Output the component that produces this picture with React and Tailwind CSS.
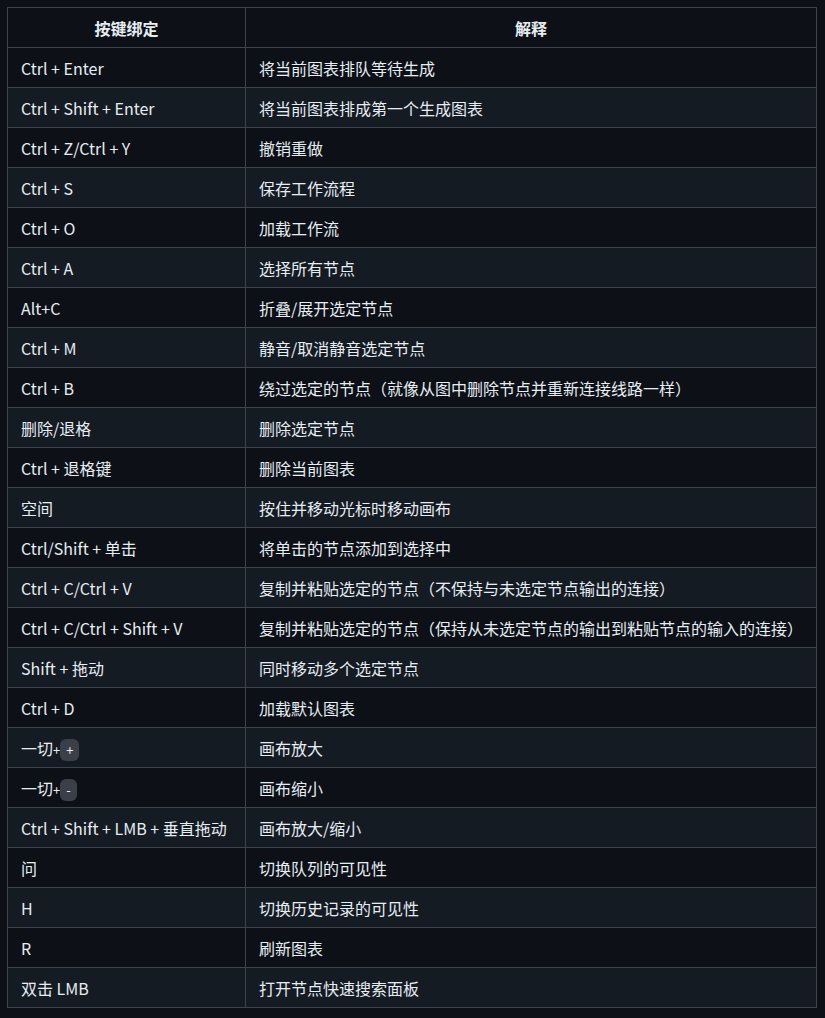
const rows = [
  ["Ctrl + Enter", "将当前图表排队等待生成"],
  ["Ctrl + Shift + Enter", "将当前图表排成第一个生成图表"],
  ["Ctrl + Z/Ctrl + Y", "撤销重做"],
  ["Ctrl + S", "保存工作流程"],
  ["Ctrl + O", "加载工作流"],
  ["Ctrl + A", "选择所有节点"],
  ["Alt+C", "折叠/展开选定节点"],
  ["Ctrl + M", "静音/取消静音选定节点"],
  ["Ctrl + B", "绕过选定的节点（就像从图中删除节点并重新连接线路一样）"],
  ["删除/退格", "删除选定节点"],
  ["Ctrl + 退格键", "删除当前图表"],
  ["空间", "按住并移动光标时移动画布"],
  ["Ctrl/Shift + 单击", "将单击的节点添加到选择中"],
  ["Ctrl + C/Ctrl + V", "复制并粘贴选定的节点（不保持与未选定节点输出的连接）"],
  ["Ctrl + C/Ctrl + Shift + V", "复制并粘贴选定的节点（保持从未选定节点的输出到粘贴节点的输入的连接）"],
  ["Shift + 拖动", "同时移动多个选定节点"],
  ["Ctrl + D", "加载默认图表"],
  ["kbd+", "画布放大"],
  ["kbd-", "画布缩小"],
  ["Ctrl + Shift + LMB + 垂直拖动", "画布放大/缩小"],
  ["问", "切换队列的可见性"],
  ["H", "切换历史记录的可见性"],
  ["R", "刷新图表"],
  ["双击 LMB", "打开节点快速搜索面板"],
];

function Key({ k }) {
  if (k.startsWith("kbd")) {
    return (
      <span>
        一切<span className="text-[13px]">+</span>
        <span className="inline-block align-middle h-[22px] bg-[#3b4048] rounded-md px-[6px] text-[13px] leading-[22px]">
          {k.slice(3)}
        </span>
      </span>
    );
  }
  return k;
}

export default function App() {
  return (
    <div
      className="min-h-[1018px] bg-[#0d1117] text-[#e6edf3] pt-[7px] px-[7px]"
      style={{ fontFamily: '"Noto Sans CJK SC", "Microsoft YaHei", sans-serif' }}
    >
      <table className="w-[810px] border-collapse text-[16px] table-fixed">
        <colgroup>
          <col className="w-[238px]" />
          <col />
        </colgroup>
        <thead>
          <tr className="bg-[#0d1117]">
            <th className="h-[40px] border border-[#3d444d] px-[13px] pt-[2px] pb-0 leading-[25px] font-bold text-center">
              按键绑定
            </th>
            <th className="h-[40px] border border-[#3d444d] px-[13px] pt-[2px] pb-0 leading-[25px] font-bold text-center">
              解释
            </th>
          </tr>
        </thead>
        <tbody>
          {rows.map(([k, v], i) => (
            <tr key={i} className={i % 2 === 1 ? "bg-[#151b23]" : "bg-[#0d1117]"}>
              <td className="h-[40px] border border-[#3d444d] px-[13px] pt-[2px] pb-0 leading-[25px] whitespace-nowrap">
                <Key k={k} />
              </td>
              <td className="h-[40px] border border-[#3d444d] px-[13px] pt-[2px] pb-0 leading-[25px] whitespace-nowrap">
                {v}
              </td>
            </tr>
          ))}
        </tbody>
      </table>
    </div>
  );
}
